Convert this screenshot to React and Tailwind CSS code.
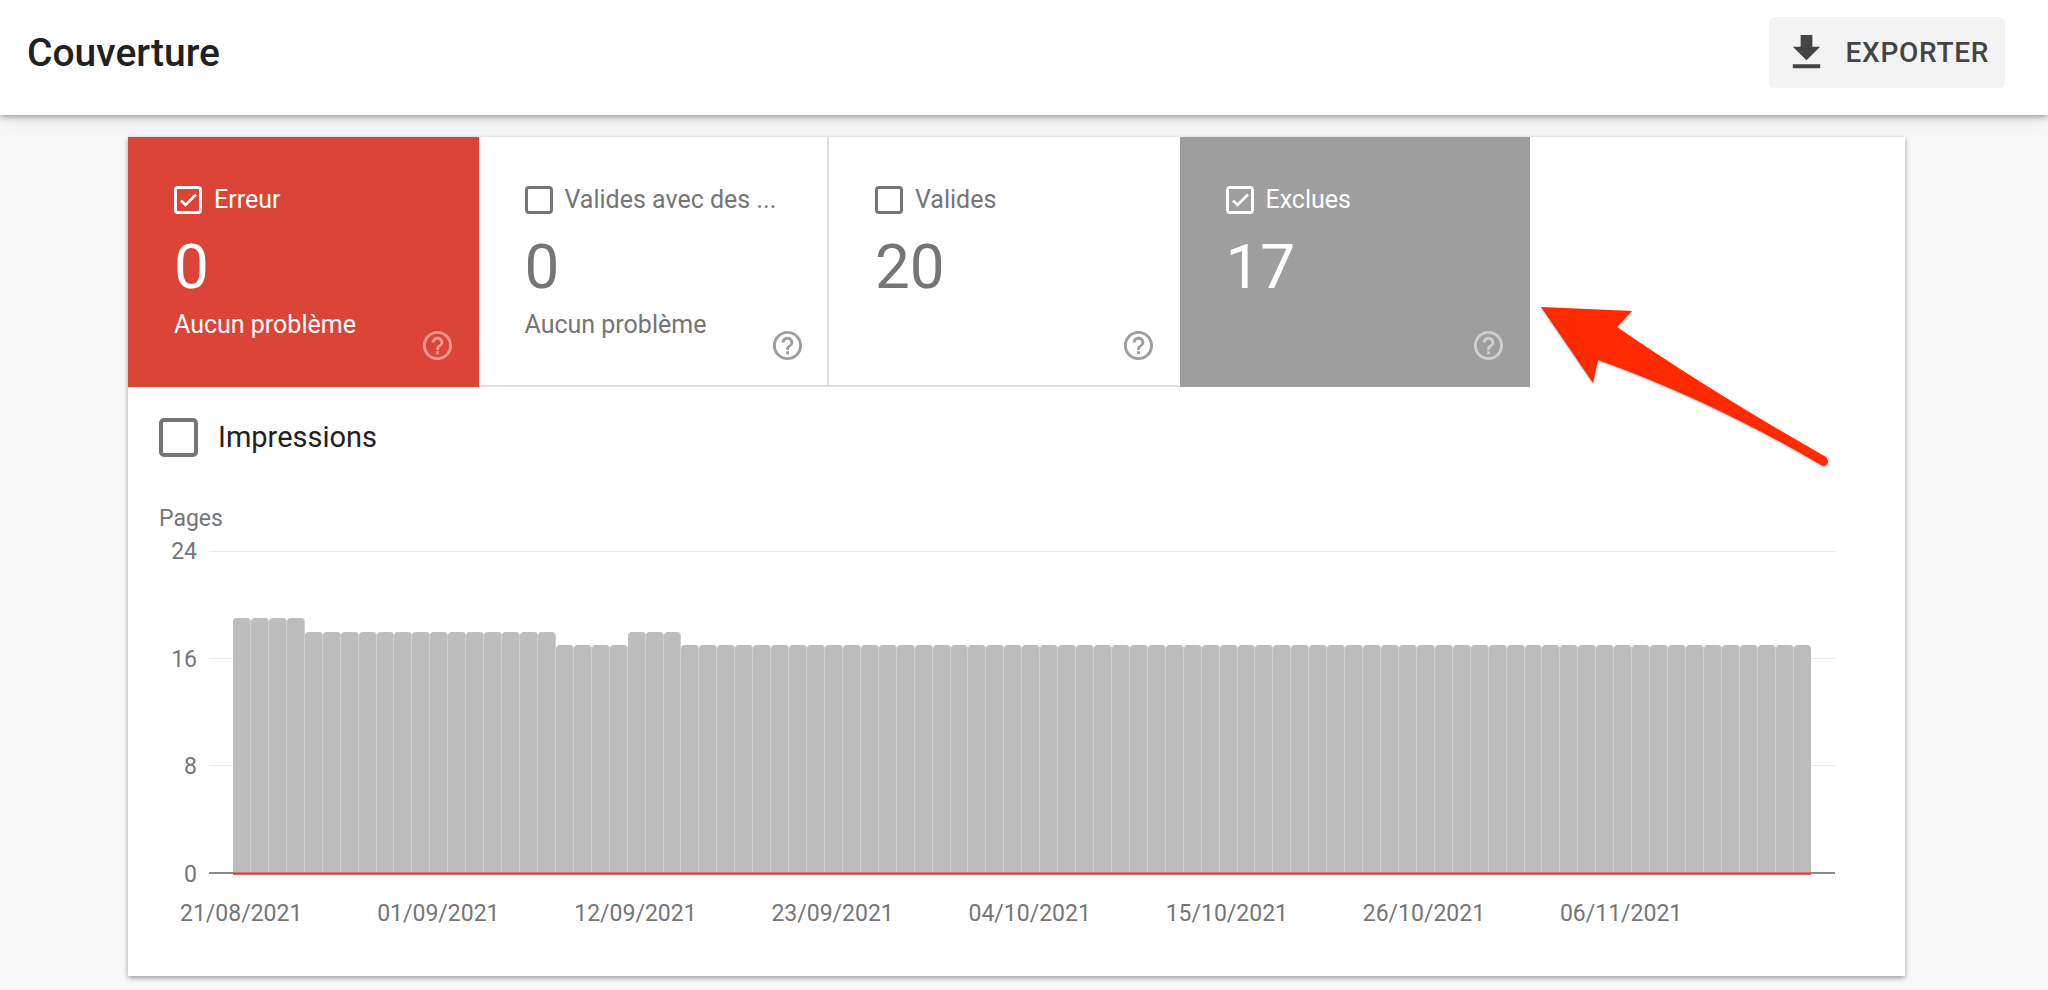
import React, { useState } from "react";
import { MdHelpOutline } from "react-icons/md";

const tiles = [
  {
    id: "erreur",
    label: "Erreur",
    count: 0,
    note: "Aucun problème",
    checked: true,
    tone: "bg-[#db4437] text-white",
    box: "border-white",
    help: "text-[#f6988f]",
  },
  {
    id: "avertissements",
    label: "Valides avec des ...",
    count: 0,
    note: "Aucun problème",
    checked: false,
    tone: "border-r-2 border-b-2 border-[#e0e0e0] text-[#757575]",
    box: "border-[#757575]",
    help: "-mr-0.5 text-[#9e9e9e]",
  },
  {
    id: "valides",
    label: "Valides",
    count: 20,
    note: "",
    checked: false,
    tone: "border-b-2 border-[#e0e0e0] text-[#757575]",
    box: "border-[#757575]",
    help: "text-[#9e9e9e]",
  },
  {
    id: "exclues",
    label: "Exclues",
    count: 17,
    note: "",
    checked: true,
    tone: "bg-[#9e9e9e] text-white",
    box: "border-white",
    help: "text-[#cfcfcf]",
  },
];

// [valeur, nombre de jours consécutifs]
const runs = [
  [19, 4],
  [18, 14],
  [17, 4],
  [18, 3],
  [17, 63],
];
const values = runs.flatMap(([value, days]) => Array(days).fill(value));
const MAX = 24;

const ticks = [24, 16, 8, 0];

const dates = [
  "21/08/2021",
  "01/09/2021",
  "12/09/2021",
  "23/09/2021",
  "04/10/2021",
  "15/10/2021",
  "26/10/2021",
  "06/11/2021",
];

const Header = () => (
  <header className="relative z-10 flex h-[115px] items-start justify-between bg-white pt-[17px] pr-[43px] pl-[27px] shadow-[0_2px_6px_rgba(0,0,0,0.35),0_4px_24px_rgba(0,0,0,0.08)]">
    <h1 className="text-[39px] leading-[72px] font-medium text-[#212121]">
      Couverture
    </h1>
    <button
      type="button"
      className="flex h-[71px] items-center gap-4 rounded-md bg-[#f3f3f3] pr-4 pl-[14px] text-[28px] font-medium tracking-wide text-[#444]"
    >
      <svg viewBox="0 0 24 24" className="size-[47px]" fill="currentColor">
        <path d="M19 9h-4V3H9v6H5l7 7 7-7zM5 18v2h14v-2H5z" />
      </svg>
      EXPORTER
    </button>
  </header>
);

const Tile = ({ tile }) => {
  const [checked, setChecked] = useState(tile.checked);

  return (
    <div className={`h-[250px] pt-[45px] pl-[46px] ${tile.tone}`}>
      <label className="flex h-9 items-center gap-3 text-[25px]">
        <span className="grid">
          <input
            type="checkbox"
            checked={checked}
            onChange={() => setChecked(!checked)}
            className={`size-7 appearance-none rounded-sm border-3 [grid-area:1/1] ${tile.box}`}
          />
          {checked && (
            <svg
              viewBox="0 0 28 28"
              className="pointer-events-none size-7 [grid-area:1/1]"
              fill="none"
              stroke="currentColor"
              strokeWidth="2.5"
            >
              <path d="M7 14.5l4.5 4.5L22 8.5" />
            </svg>
          )}
        </span>
        {tile.label}
      </label>
      <div className="mt-3 text-[62px] leading-[74px]">{tile.count}</div>
      <div className="mt-[3px] flex h-14 justify-between pr-6 text-[25px] leading-9">
        <span>{tile.note}</span>
        <button
          type="button"
          aria-label={`Aide : ${tile.label}`}
          className={`self-end ${tile.help}`}
        >
          <MdHelpOutline className="size-[35px]" />
        </button>
      </div>
    </div>
  );
};

const Arrow = () => (
  <svg
    viewBox="0 0 290 162"
    className="pointer-events-none absolute top-[169px] left-[1412px] h-[162px] w-[290px] drop-shadow-[0_1px_1px_rgba(0,0,0,0.3)]"
    fill="#ff2a00"
  >
    <path d="M1 1L92 5L77 21Q170 85 286 151Q290 156 286 159Q284 161 281 159Q170 94 58 54L53 77Z" />
  </svg>
);

const Chart = () => (
  <figure className="pr-[70px] pb-[46px] pl-[31px]">
    <figcaption className="mt-12 text-[23px] leading-7 text-[#757575]">
      Pages
    </figcaption>
    <div className="mt-[18px] flex gap-3">
      <div className="-mt-[11px] -mb-[13px] flex w-[38px] flex-col justify-between text-right text-[23px] leading-6 text-[#757575]">
        {ticks.map((tick) => (
          <span key={tick}>{tick}</span>
        ))}
      </div>
      <div className="relative h-[323px] flex-1 px-6">
        <div className="absolute inset-0 flex flex-col justify-between">
          {ticks.map((tick) => (
            <div
              key={tick}
              className={tick ? "h-px bg-[#e8e8e8]" : "h-0.5 bg-[#8a8a8a]"}
            />
          ))}
        </div>
        <div className="relative flex h-full items-end">
          {values.map((value, i) => (
            <div
              key={i}
              className="flex-1 rounded-t-[4px] border-r border-[#d0d0d0] bg-[#bdbdbd] last:border-r-0"
              style={{ height: `${(value / MAX) * 100}%` }}
            />
          ))}
        </div>
        <div className="relative -mt-0.5 h-[3px] border-y border-[#e0756f] bg-[#a0504c]" />
      </div>
    </div>
    <div className="mt-6 mr-[78px] ml-[21px] grid grid-cols-8 text-[23px] leading-8 text-[#757575]">
      {dates.map((date) => (
        <span key={date}>{date}</span>
      ))}
    </div>
  </figure>
);

const App = () => (
  <div className="min-h-screen bg-[#f8f8f8] pb-[14px] font-[Roboto,sans-serif]">
    <Header />
    <main className="relative mt-[22px] mr-[143px] ml-32 bg-white shadow-[0_2px_5px_rgba(0,0,0,0.38)]">
      <div className="grid max-w-[1402px] grid-cols-4">
        {tiles.map((tile) => (
          <Tile key={tile.id} tile={tile} />
        ))}
      </div>
      <Arrow />
      <label className="mt-[31px] ml-[31px] flex w-fit items-center gap-5 text-[29px] leading-[39px] text-[#212121]">
        <input
          type="checkbox"
          className="size-[39px] appearance-none rounded-[5px] border-4 border-[#757575]"
        />
        Impressions
      </label>
      <Chart />
    </main>
  </div>
);

export default App;
